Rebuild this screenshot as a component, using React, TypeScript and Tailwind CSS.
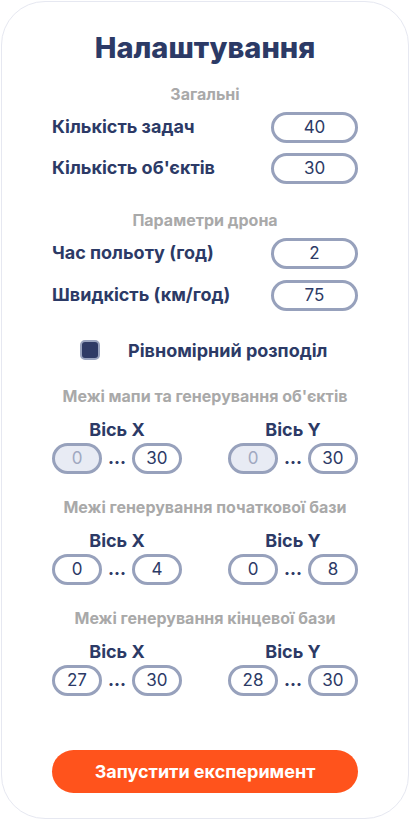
import React, { useState } from "react"

const navy = "text-[#2c3a66]"

function SectionTitle({ children, className = "" }: { children: React.ReactNode; className?: string }) {
  return (
    <div className={`h-5 text-center text-[16px] leading-5 font-bold text-[#a9a9a9] ${className}`}>{children}</div>
  )
}

function FieldRow({ label, value, className = "" }: { label: string; value: string; className?: string }) {
  return (
    <div className={`flex h-[31px] items-center justify-between ${className}`}>
      <span className={`text-[18px] font-bold ${navy} -mt-[3px]`}>{label}</span>
      <div
        className={`flex h-[31px] w-[87px] items-center justify-center rounded-full border-[3px] border-[#97a1bc] bg-white text-[17px] ${navy}`}
      >
        {value}
      </div>
    </div>
  )
}

function Pill({ value, disabled }: { value: string; disabled?: boolean }) {
  return (
    <div
      className={`flex h-[31px] w-[50px] items-center justify-center rounded-full border-[3px] border-[#97a1bc] text-[17px] ${
        disabled ? "bg-[#e8ebf4] text-[#a0a8c0]" : `bg-white ${navy}`
      }`}
    >
      {value}
    </div>
  )
}

function Axis({ label, from, to, fromDisabled }: { label: string; from: string; to: string; fromDisabled?: boolean }) {
  return (
    <div className="flex w-[130px] flex-col items-center">
      <div className={`h-5 text-[18px] leading-5 font-bold ${navy}`}>{label}</div>
      <div className="mt-[3px] flex w-full items-center justify-between">
        <Pill value={from} disabled={fromDisabled} />
        <span className={`text-[17px] font-extrabold ${navy}`}>...</span>
        <Pill value={to} />
      </div>
    </div>
  )
}

function RangeBlock({
  title,
  x,
  y,
  disabledStart,
  className = "",
}: {
  title: string
  x: [string, string]
  y: [string, string]
  disabledStart?: boolean
  className?: string
}) {
  return (
    <div className={className}>
      <SectionTitle>{title}</SectionTitle>
      <div className="mt-[14px] flex justify-between">
        <Axis label="Вісь X" from={x[0]} to={x[1]} fromDisabled={disabledStart} />
        <Axis label="Вісь Y" from={y[0]} to={y[1]} fromDisabled={disabledStart} />
      </div>
    </div>
  )
}

export default function App() {
  const [uniform, setUniform] = useState(true)

  return (
    <div className="h-[820px] w-[410px] bg-white p-px" style={{ fontFamily: "Inter, 'Noto Sans', sans-serif" }}>
      <div className="h-full rounded-[44px] border border-[#e6e8f1] bg-white px-[50px] pt-[28px]">
        <h1 className={`h-9 text-center text-[29px] leading-9 font-extrabold ${navy}`}>Налаштування</h1>

        <SectionTitle className="mt-[18px]">Загальні</SectionTitle>
        <FieldRow label="Кількість задач" value="40" className="mt-[8px]" />
        <FieldRow label="Кількість об'єктів" value="30" className="mt-[10px]" />

        <SectionTitle className="mt-[26px]">Параметри дрона</SectionTitle>
        <FieldRow label="Час польоту (год)" value="2" className="mt-[8px]" />
        <FieldRow label="Швидкість (км/год)" value="75" className="mt-[11px]" />

        <label className="mt-[29px] flex h-5 cursor-pointer items-center pl-[28px]">
          <span
            onClick={() => setUniform(!uniform)}
            className={`h-5 w-5 rounded-[5px] border-2 border-[#9aa4bf] ${uniform ? "bg-[#2f3b66]" : "bg-white"}`}
          />
          <span className={`ml-[28px] text-[18px] font-bold ${navy}`}>Рівномірний розподіл</span>
        </label>

        <RangeBlock
          title="Межі мапи та генерування об'єктів"
          x={["0", "30"]}
          y={["0", "30"]}
          disabledStart
          className="mt-[26px]"
        />
        <RangeBlock title="Межі генерування початкової бази" x={["0", "4"]} y={["0", "8"]} className="mt-[23px]" />
        <RangeBlock title="Межі генерування кінцевої бази" x={["27", "30"]} y={["28", "30"]} className="mt-[23px]" />

        <button className="mt-[54px] flex h-[43px] w-full items-center justify-center rounded-full bg-[#ff531c] text-[18px] font-bold text-white">
          Запустити експеримент
        </button>
      </div>
    </div>
  )
}
